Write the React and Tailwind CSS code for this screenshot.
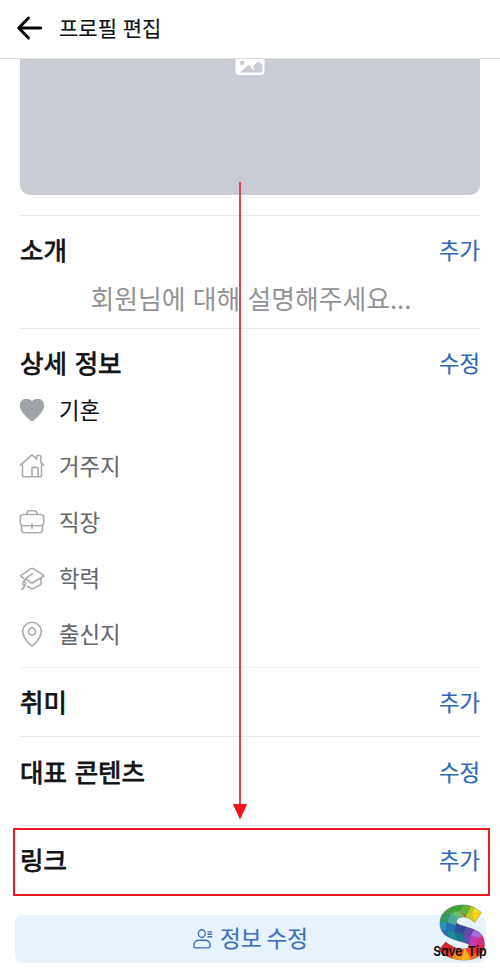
import React from 'react'

const details = [
  { label: '기혼', Icon: HeartIcon, filled: true },
  { label: '거주지', Icon: HomeIcon },
  { label: '직장', Icon: WorkIcon },
  { label: '학력', Icon: SchoolIcon },
  { label: '출신지', Icon: PinIcon }
]

const iconProps = {
  width: 28,
  height: 28,
  viewBox: '0 0 28 28',
  fill: 'none',
  stroke: '#a9abb0',
  strokeWidth: 1.6,
  strokeLinecap: 'round',
  strokeLinejoin: 'round'
}

function HeartIcon() {
  return (
    <svg {...iconProps} fill="#a0a3aa" stroke="none">
      <path d="M14 5.200C12.500 3.500 10.400 2.800 8.400 2.800 4.600 2.800 1.800 5.700 1.800 9.300c0 6.400 6.500 11.300 10.100 14.900 1.300 1.200 2.900 1.200 4.200 0C19.700 20.600 26.200 15.700 26.200 9.300 26.200 5.700 23.400 2.800 19.600 2.800c-2 0-4.100.7-5.600 2.400z" />
    </svg>
  )
}

function HomeIcon() {
  return (
    <svg {...iconProps}>
      <path d="M2.300 13.200 14 2.800l4.600 4V4.500a1 1 0 0 1 1-1h2.200a1 1 0 0 1 1 1v6l2.900 2.700" />
      <path d="M4.500 11.600v11.900a1.300 1.300 0 0 0 1.300 1.300h16.400a1.300 1.300 0 0 0 1.300-1.300V11.600" />
      <path d="M14 24.600v-8.200a1 1 0 0 1 1-1h4a1 1 0 0 1 1 1v8.200" />
    </svg>
  )
}

function WorkIcon() {
  return (
    <svg {...iconProps}>
      <path d="M9.200 6.500V5a2.200 2.200 0 0 1 2.200-2.200h5.200A2.200 2.200 0 0 1 18.800 5v1.500" />
      <path d="M5.300 6.500h17.400a3 3 0 0 1 3 3v5.200a3 3 0 0 1-3 3H5.300a3 3 0 0 1-3-3V9.500a3 3 0 0 1 3-3z" />
      <path d="M3.500 17.300v4.500a3 3 0 0 0 3 3h15a3 3 0 0 0 3-3v-4.500M14 15.700v4.600" />
    </svg>
  )
}

function SchoolIcon() {
  return (
    <svg {...iconProps}>
      <path d="M5.800 14.200 3 12.500a.7.700 0 0 1 0-1.200L13 4.600a2 2 0 0 1 2.200 0L25.400 11a.7.700 0 0 1 0 1.200l-10 6.300a2.200 2.200 0 0 1-2.400 0L8.600 15.800c-.9-.6-.9-1.500 0-2.100L14.300 10" />
      <path d="M23 14v5.800a1 1 0 0 1-.5.9l-7.300 3.900a2 2 0 0 1-1.800 0l-4.300-2.300" />
      <path d="M8.400 15.300c-1.800 0-2.600 1-2.600 2.600" />
      <circle cx="6.200" cy="19.500" r="1.500" />
      <path d="M6.500 21.300c0 2-1.100 3.400-2.800 4" />
    </svg>
  )
}

function PinIcon() {
  return (
    <svg {...iconProps}>
      <path d="M14 2.300c-5.300 0-9.300 4-9.300 9.200 0 5.200 4.100 9.800 7.800 13.500a2.100 2.100 0 0 0 3 0c3.700-3.700 7.800-8.300 7.800-13.500 0-5.200-4-9.200-9.300-9.200z" />
      <circle cx="14" cy="11.500" r="3.600" />
    </svg>
  )
}

function BackIcon() {
  return (
    <svg width="28" height="26" viewBox="0 0 28 26" fill="none" stroke="#050505" strokeWidth="3" strokeLinecap="round" strokeLinejoin="round">
      <path d="M13.500 3 3.700 13l9.800 10M4.500 13h21.200" />
    </svg>
  )
}

function PersonListIcon() {
  return (
    <svg width="20" height="20" viewBox="0 0 20 20" fill="none" stroke="#3a70bd" strokeWidth="1.400">
      <ellipse cx="8.800" cy="4.600" rx="3.400" ry="3.900" />
      <path d="M2.600 18.900h12.800a1.600 1.600 0 0 0 1.600-1.600v-1.500c0-2.700-2-4.600-4.700-4.600H5.700C3 11.200 1 13.100 1 15.800v1.500a1.600 1.600 0 0 0 1.600 1.600z" />
      <path d="M14.400 2.900h4.800M14.400 5.300h4.800M14.400 7.700h4.800" />
    </svg>
  )
}

const facets = [
  ['#43a047', '40,25 85,25 78,55 55,60'],
  ['#3da637', '85,25 122,25 105,48 78,55'],
  ['#63b23a', '122,25 140,30 130,68 105,48'],
  ['#b5c526', '140,30 150,35 140,56 130,50'],
  ['#f3e01c', '150,35 172,55 140,56'],
  ['#f7d70f', '172,55 148,86 140,56'],
  ['#c5cf2b', '130,50 140,56 148,86 122,68'],
  ['#6cc06b', '78,55 105,48 122,70 88,82'],
  ['#2e9a68', '40,60 78,55 66,82 42,88'],
  ['#4aa99b', '78,55 100,70 94,92 66,82'],
  ['#1f97c6', '40,85 66,82 62,108 42,106'],
  ['#2174b5', '62,108 66,82 94,92 88,112'],
  ['#1d6cb1', '40,104 62,108 82,136 50,130'],
  ['#198b9c', '62,108 88,112 104,140 80,136'],
  ['#2c4f9c', '88,112 94,86 124,92 116,118'],
  ['#17768f', '88,112 116,118 128,146 102,142'],
  ['#5a4ba8', '124,92 150,102 138,122 116,118'],
  ['#6c48b5', '116,118 138,122 140,150 124,146'],
  ['#a56ce0', '150,98 182,120 160,130 138,122'],
  ['#c23bb0', '138,122 160,130 152,154 132,152'],
  ['#d62c83', '160,130 182,118 184,150 152,154'],
  ['#e02752', '152,154 184,148 178,178 148,176'],
  ['#ef4034', '152,154 148,176 120,186 118,158'],
  ['#d92532', '62,136 92,150 76,172 40,165'],
  ['#ef5a28', '92,150 120,158 112,182 76,172'],
  ['#e8391f', '40,165 76,172 86,198 50,190'],
  ['#f7941d', '76,172 112,182 108,200 86,198'],
  ['#f6b21d', '112,182 120,160 142,200 108,200'],
  ['#f0642b', '134,182 148,176 178,178 142,200']
]

const ribbon = 'M169 53C152 37 134 30 115 30 75 30 45 52 45 85c0 35 30 45 60 54 20 5 28 9 28 15 0 7-11 9-25 8-18-2-33-10-46-21L42 165c20 23 53 31 80 30 36-1 58-20 56-50-2-30-18-38-48-47-24-7-36-10-36-20 2-10 14-13 26-12 12 2 20 8 29 16z'

function SaveTipLogo() {
  return (
    <svg width="75" height="77" viewBox="0 0 225 231">
      <clipPath id="ribbon">
        <path d={ribbon} />
      </clipPath>
      <path d={ribbon} fill="#e8452f" stroke="#707070" strokeWidth="2" />
      <g clipPath="url(#ribbon)">
        {facets.map(([color, points], i) => (
          <polygon key={i} points={points} fill={color} stroke={color} strokeWidth="0.8" />
        ))}
      </g>
      <g fontSize="39" fontWeight="600" fill="#080808" className="font-['Inter',sans-serif] [font-feature-settings:'cv11']">
        <text x="25" y="184" textLength="87" lengthAdjust="spacingAndGlyphs">Save</text>
        <text x="128" y="184" textLength="57" lengthAdjust="spacingAndGlyphs">Tip</text>
      </g>
    </svg>
  )
}

function SectionTitle({ title, action, className = '' }) {
  return (
    <div className={`flex items-center justify-between pb-[3px] ${className}`}>
      <h2 className="text-[25.500px] leading-8 [word-spacing:2px] text-[#111214] [-webkit-text-stroke:0.8px_#111214]">{title}</h2>
      <button className="text-[22.300px] leading-8 text-[#2f68b8] [-webkit-text-stroke:0.15px_#2f68b8]">{action}</button>
    </div>
  )
}

export default function App() {
  return (
    <div className="relative w-[500px] h-[972px] overflow-hidden bg-white font-['Noto_Sans_CJK_KR',sans-serif]">
      <header className="flex h-[59px] items-center border-b border-[#dcdddf] pl-[15px] pb-0.5">
        <BackIcon />
        <h1 className="-mt-[3px] ml-4 text-[21px] leading-8 [word-spacing:1px] text-[#111214] [-webkit-text-stroke:0.15px_#111214]">프로필 편집</h1>
      </header>

      <main className="px-5">
        <div className="flex h-[136px] justify-center rounded-b-[10px] bg-[#c9ccd4]">
          <svg width="30" height="16" viewBox="0 0 30 16">
            <path d="M.5 0h29v12a4 4 0 0 1-4 4h-21a4 4 0 0 1-4-4z" fill="#fff" />
            <circle cx="7.200" cy="3.800" r="2.300" fill="#c9ccd4" />
            <path d="M5 13.500 13 6.300a1 1 0 0 1 1.400 0L17 8.700 22.500 2.800a1 1 0 0 1 1.400 0L27.500 6v6a1.500 1.500 0 0 1-1.500 1.500z" fill="#c9ccd4" />
            <path d="M16.500 8.300 19.300 11" stroke="#fff" strokeWidth="1.200" />
          </svg>
        </div>

        <section className="mt-5 h-[113px] border-t border-[#e7e8ea]">
          <SectionTitle title="소개" action="추가" className="h-[68px]" />
          <p className="pl-0.5 text-center text-[25.800px] leading-7 [word-spacing:1.500px] text-[#929396]">회원님에 대해 설명해주세요...</p>
        </section>

        <section className="h-[339px] border-t border-[#e7e8ea]">
          <SectionTitle title="상세 정보" action="수정" className="h-[53px] pt-[15px]" />
          <ul>
            {details.map(({ label, Icon, filled }) => (
              <li key={label} className="flex h-14 items-center gap-[13px]">
                <span className="-ml-0.5"><Icon /></span>
                <span className={`-mt-px text-[22.300px] [-webkit-text-stroke-width:0.1px] ${filled ? 'text-[#111214]' : 'text-[#66676b]'}`}>{label}</span>
              </li>
            ))}
          </ul>
        </section>

        <section className="h-[69px] border-t border-[#f1f2f3]">
          <SectionTitle title="취미" action="추가" className="h-[69px]" />
        </section>
        <section className="h-[89px] border-t border-[#e7e8ea]">
          <SectionTitle title="대표 콘텐츠" action="수정" className="h-[70px]" />
        </section>
        <section className="h-[90px] border-t border-[#dfe3e5]">
          <SectionTitle title="링크" action="추가" className="h-[69px]" />
        </section>
      </main>

      <button className="mx-[15px] flex h-12 w-[471px] items-center justify-center gap-[7px] rounded-lg bg-[#e7f3ff] text-[22.500px] text-[#3a70bd]">
        <PersonListIcon />
        <span className="-mt-0.5 [-webkit-text-stroke-width:0.15px]">정보 수정</span>
      </button>

      {/* arrow and frame pointing at the link section */}
      <svg className="absolute left-[232px] top-[182px]" width="16" height="638" viewBox="0 0 16 638">
        <path d="M7 0h2v624H7z" fill="#e5434a" />
        <path d="M.8 622h14.400L8 637.500z" fill="#f5121c" />
      </svg>
      <div className="absolute left-[13px] top-[828px] h-[68px] w-[477px] border-2 border-[#ef1820]" />
      <div className="absolute left-[425px] top-[895px]">
        <SaveTipLogo />
      </div>
    </div>
  )
}
